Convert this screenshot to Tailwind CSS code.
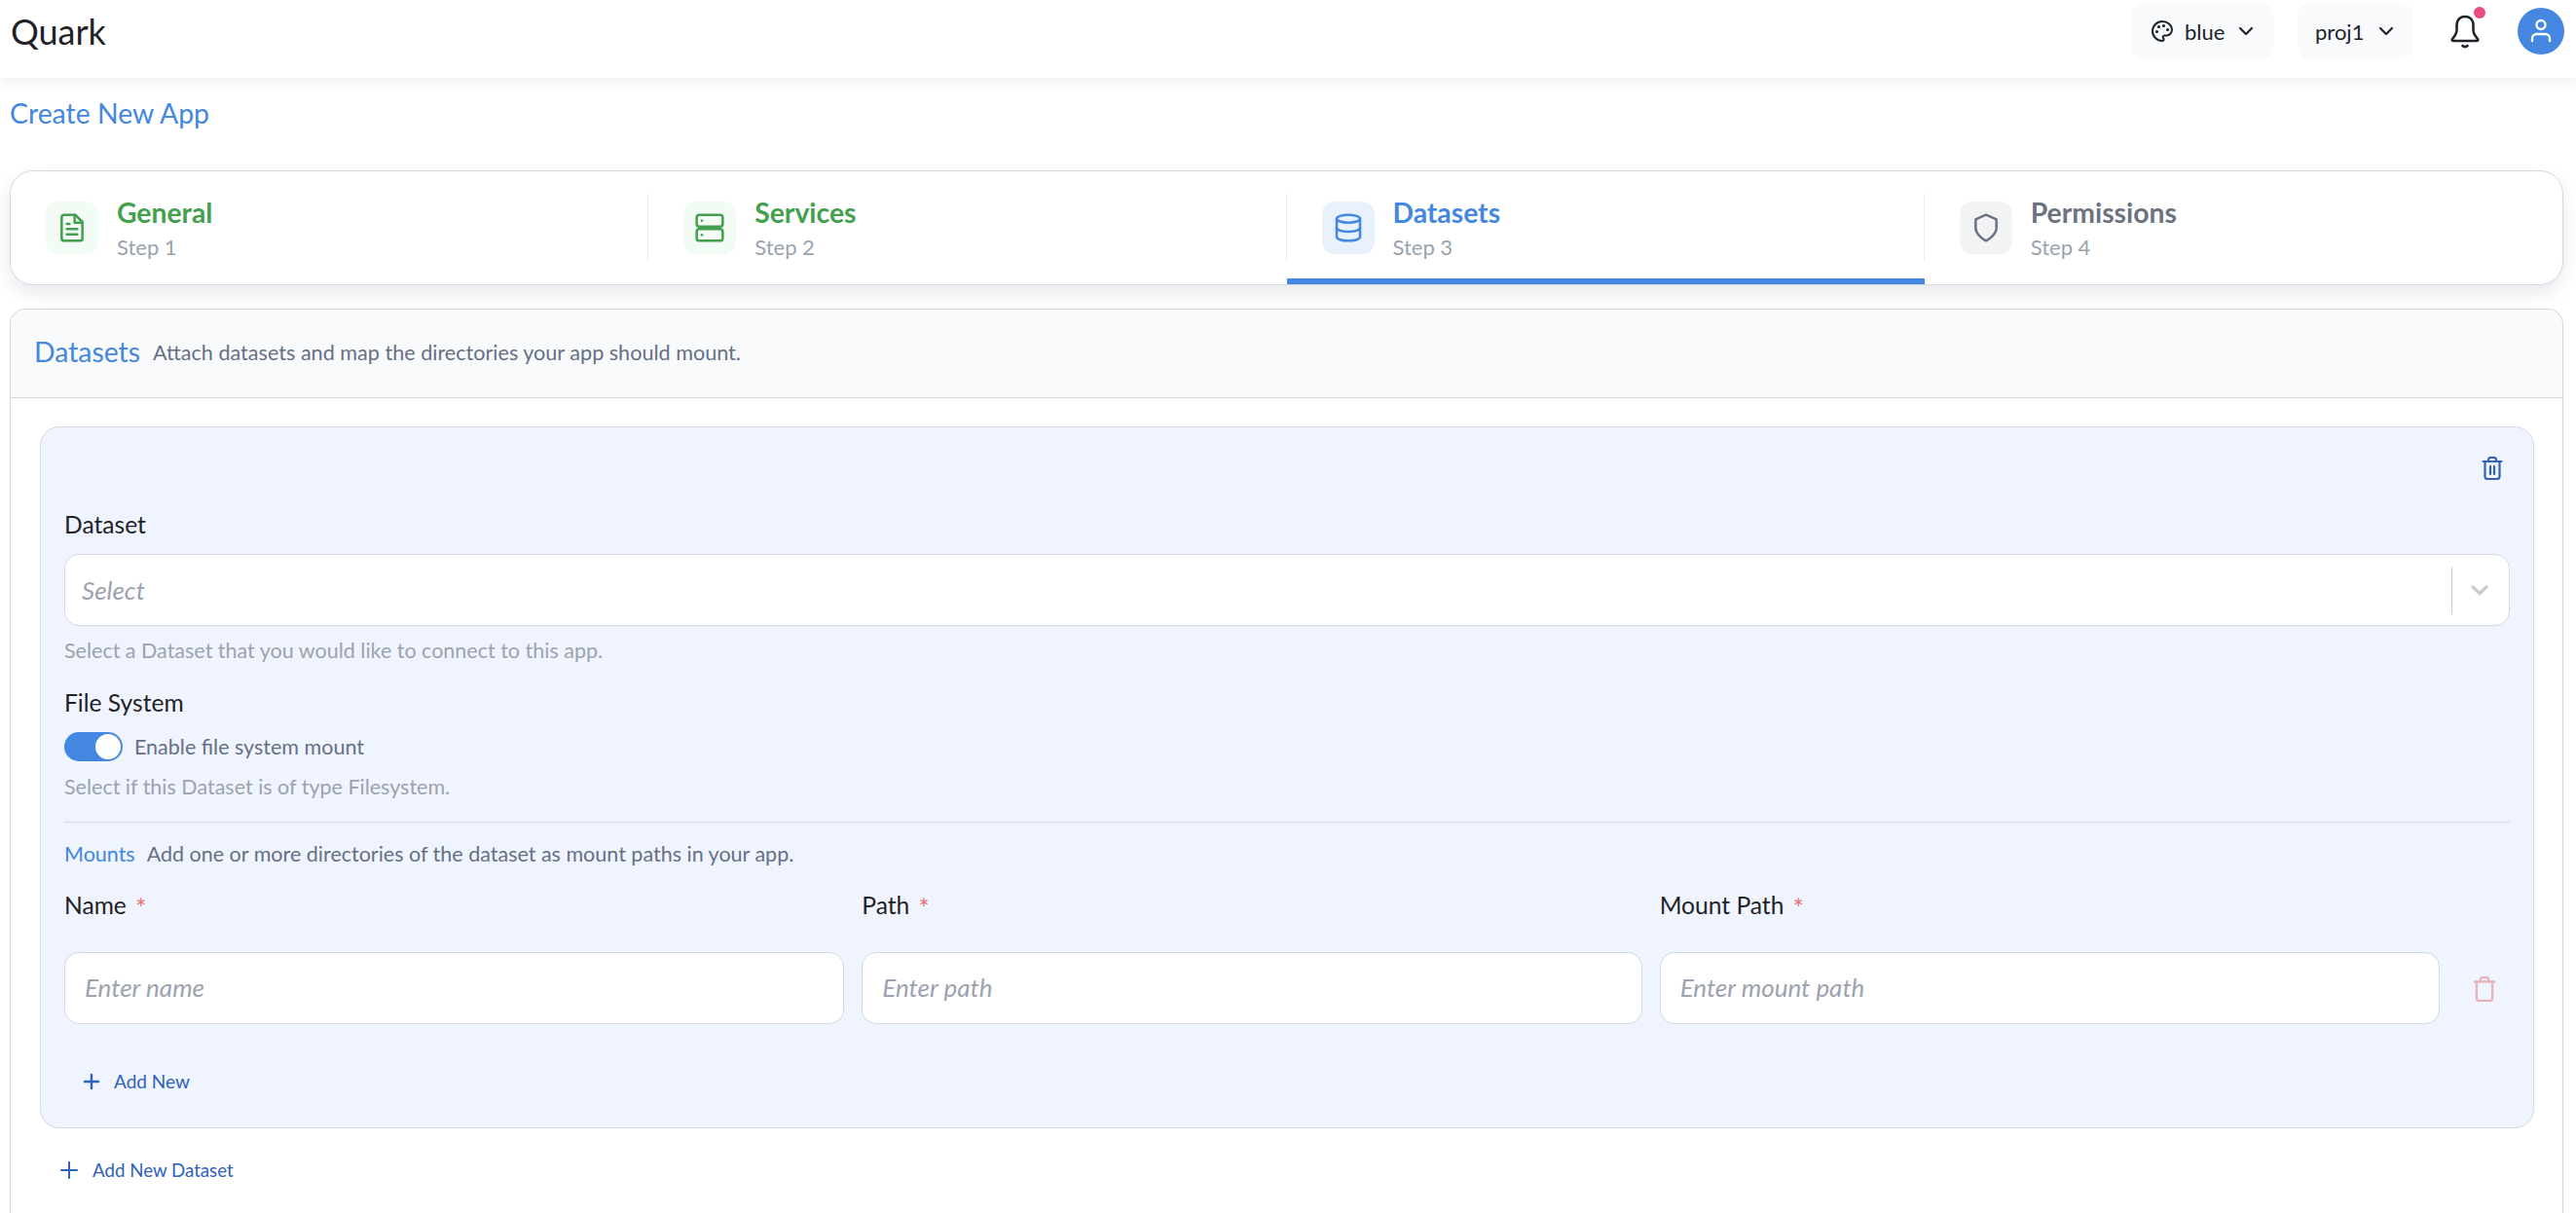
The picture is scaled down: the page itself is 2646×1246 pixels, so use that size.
<!DOCTYPE html>
<html lang="en">
<head>
<meta charset="utf-8">
<title>Quark</title>
<script src="https://cdn.jsdelivr.net/npm/@tailwindcss/browser@4"></script>
</head>
<body class="bg-white h-[1246px] overflow-hidden font-['Lato',sans-serif] text-[#1f2328]">
<header class="h-[80px] flex items-center justify-between pl-[11px] pr-[12px] bg-white shadow-[0_3px_14px_rgba(30,40,60,0.08)] relative">
  <div class="text-[36px] leading-[50px] pb-[16px]">Quark</div>
  <div class="flex items-center">
    <div class="flex items-center w-[146px] h-[56px] mb-[16px] pl-[19px] rounded-[12px] bg-[#f8fafc] text-[22px]">
      <svg class="w-[24px] h-[24px]" viewBox="0 0 24 24" fill="none" stroke="#1f2328" stroke-width="2" stroke-linecap="round" stroke-linejoin="round"><circle cx="13.5" cy="6.5" r=".6" fill="#1f2328"/><circle cx="17.5" cy="10.5" r=".6" fill="#1f2328"/><circle cx="8.5" cy="7.5" r=".6" fill="#1f2328"/><circle cx="6.5" cy="12.5" r=".6" fill="#1f2328"/><path d="M12 2C6.5 2 2 6.5 2 12s4.500 10 10 10c.930 0 1.600-.750 1.600-1.690 0-.430-.180-.830-.440-1.130-.290-.300-.440-.670-.440-1.120a1.640 1.640 0 0 1 1.670-1.670h2c3.050 0 5.560-2.500 5.560-5.550C21.950 6.010 17.460 2 12 2z"/></svg>
      <span class="ml-[11px]">blue</span>
      <svg class="w-[24px] h-[24px] ml-[10px]" viewBox="0 0 24 24" fill="none" stroke="#1f2328" stroke-width="2.200" stroke-linecap="round" stroke-linejoin="round"><path d="m6 9 6 6 6-6"/></svg>
    </div>
    <div class="flex items-center w-[118px] h-[56px] mb-[16px] ml-[24px] pl-[18px] rounded-[12px] bg-[#f8fafc] text-[22px]">
      <span>proj1</span>
      <svg class="w-[24px] h-[24px] ml-[11px]" viewBox="0 0 24 24" fill="none" stroke="#1f2328" stroke-width="2.200" stroke-linecap="round" stroke-linejoin="round"><path d="m6 9 6 6 6-6"/></svg>
    </div>
    <div class="relative w-[34px] h-[36px] ml-[37px] mb-[16px]">
      <svg class="w-[34px] h-[36px]" viewBox="0 0 34 36" fill="none" stroke="#1f2328" stroke-width="2.600" stroke-linecap="round" stroke-linejoin="round"><path d="M17 3c-5.500 0-8.500 4-8.500 9v5c0 4-2 6-4.500 9-.6.900 0 2 1 2h24c1 0 1.600-1.100 1-2-2.500-3-4.500-5-4.500-9v-5c0-5-3-9-8.500-9z"/><path d="M14.500 33c1.500 1.300 3.500 1.300 5 0"/></svg>
      <span class="absolute right-[-4px] top-[-7px] w-[12px] h-[12px] rounded-full bg-[#ec4a84]"></span>
    </div>
    <div class="flex items-center justify-center w-[48px] h-[48px] ml-[37px] mb-[16px] rounded-full bg-[#4387e0]">
      <svg class="w-[28px] h-[28px]" viewBox="0 0 28 28" fill="none" stroke="#fff" stroke-width="2.400" stroke-linecap="round" stroke-linejoin="round"><circle cx="14" cy="7.500" r="4.500"/><path d="M5 24v-2.500c0-2.500 2-4.500 4.500-4.500h9c2.500 0 4.500 2 4.500 4.500V24"/></svg>
    </div>
  </div>
</header>

<main class="pl-[10px] pr-[13px]">
  <div class="h-[95px] pt-[18px]"><span class="block text-[28.4px] leading-[36px] text-[#4387e0]">Create New App</span></div>

  <nav class="grid grid-cols-4 h-[118px] border border-[#d3d8e4] rounded-[24px] bg-white shadow-[0_8px_18px_rgba(30,40,60,0.10)] overflow-hidden">
    <div class="relative flex items-start pt-[31px] pl-[36px]">
      <span class="flex items-center justify-center w-[54px] h-[54px] rounded-[13px] bg-[#f2fbf4]">
        <svg class="w-[32px] h-[32px]" viewBox="0 0 24 24" fill="none" stroke="#43a04f" stroke-width="1.900" stroke-linecap="round" stroke-linejoin="round"><path d="M14.500 2H6a2 2 0 0 0-2 2v16a2 2 0 0 0 2 2h12a2 2 0 0 0 2-2V7.500z"/><path d="M14 2v6h6"/><path d="M16 13H8"/><path d="M16 17H8"/><path d="M10 9H8"/></svg>
      </span>
      <div class="ml-[19px] mt-[-7px]"><div class="text-[28.3px] leading-[36px] font-bold text-[#43a04f]">General</div><div class="text-[22px] leading-[32px] mt-[2px] text-[#9aa3af]">Step 1</div></div>
      <span class="absolute right-0 top-[23px] h-[70px] w-px bg-[#eceef2]"></span>
    </div>
    <div class="relative flex items-start pt-[31px] pl-[36px]">
      <span class="flex items-center justify-center w-[54px] h-[54px] rounded-[13px] bg-[#f2fbf4]">
        <svg class="w-[32px] h-[32px]" viewBox="0 0 24 24" fill="none" stroke="#43a04f" stroke-width="1.900" stroke-linecap="round" stroke-linejoin="round"><rect x="2" y="2" width="20" height="9" rx="2"/><rect x="2" y="13" width="20" height="9" rx="2"/><path d="M6 6.500h.01"/><path d="M6 17.500h.01"/></svg>
      </span>
      <div class="ml-[19px] mt-[-7px]"><div class="text-[28.3px] leading-[36px] font-bold text-[#43a04f]">Services</div><div class="text-[22px] leading-[32px] mt-[2px] text-[#9aa3af]">Step 2</div></div>
      <span class="absolute right-0 top-[23px] h-[70px] w-px bg-[#eceef2]"></span>
    </div>
    <div class="relative flex items-start pt-[31px] pl-[36px]">
      <span class="flex items-center justify-center w-[54px] h-[54px] rounded-[13px] bg-[#e9f1fc]">
        <svg class="w-[32px] h-[32px]" viewBox="0 0 24 24" fill="none" stroke="#4387e0" stroke-width="1.900" stroke-linecap="round" stroke-linejoin="round"><ellipse cx="12" cy="5" rx="9" ry="3"/><path d="M3 5v14c0 1.700 4 3 9 3s9-1.300 9-3V5"/><path d="M3 12c0 1.700 4 3 9 3s9-1.300 9-3"/></svg>
      </span>
      <div class="ml-[19px] mt-[-7px]"><div class="text-[28.3px] leading-[36px] font-bold text-[#4387e0]">Datasets</div><div class="text-[22px] leading-[32px] mt-[2px] text-[#9aa3af]">Step 3</div></div>
      <span class="absolute right-0 top-[23px] h-[70px] w-px bg-[#eceef2]"></span>
      <span class="absolute left-0 right-0 bottom-0 h-[6px] bg-[#4387e0]"></span>
    </div>
    <div class="relative flex items-start pt-[31px] pl-[36px]">
      <span class="flex items-center justify-center w-[54px] h-[54px] rounded-[13px] bg-[#f2f3f5]">
        <svg class="w-[32px] h-[32px]" viewBox="0 0 24 24" fill="none" stroke="#6b7280" stroke-width="1.900" stroke-linecap="round" stroke-linejoin="round"><path d="M12 22s8-4 8-10V5.500l-8-3.500-8 3.500V12c0 6 8 10 8 10z"/></svg>
      </span>
      <div class="ml-[19px] mt-[-7px]"><div class="text-[28.3px] leading-[36px] font-bold text-[#6b7280]">Permissions</div><div class="text-[22px] leading-[32px] mt-[2px] text-[#9aa3af]">Step 4</div></div>
    </div>
  </nav>

  <section class="mt-[24px] h-[929px] border border-b-0 border-[#d3d8e4] rounded-t-[16px] bg-white">
    <div class="flex items-center h-[91px] pb-[2px] pl-[24px] bg-[#f8fafc] border-b border-[#d3d8e4] rounded-t-[16px]">
      <span class="mb-[3px] text-[28.4px] leading-[36px] text-[#4387e0]">Datasets</span>
      <span class="ml-[13px] text-[21.6px] leading-[30px] text-[#667085]">Attach datasets and map the directories your app should mount.</span>
    </div>
    <div class="mt-[29px] ml-[30px] mr-[29px] h-[721px] border border-[#d3d8e4] rounded-[20px] bg-[#eff4fe] px-[24px]">
      <div class="flex justify-end h-[82px] pt-[30px] pr-[7px]">
        <svg class="w-[22px] h-[24px]" viewBox="0 0 22 24" fill="none" stroke="#2f62bd" stroke-width="2.200" stroke-linecap="round" stroke-linejoin="round"><path d="M1.500 5h19"/><path d="M7 5V3.500C7 2 8 1 9.500 1h3C14 1 15 2 15 3.500V5"/><path d="M3.500 5v15.500C3.500 22 4.500 23 6 23h10c1.500 0 2.500-1 2.500-2.500V5"/><path d="M9 10v8"/><path d="M13 10v8"/></svg>
      </div>
      <label class="block text-[24.6px] leading-[36px]">Dataset</label>
      <div class="flex items-center h-[74px] mt-[12px] pl-[17px] border border-[#d3d8e4] rounded-[15px] bg-white">
        <span class="flex-1 text-[26px] italic text-[#9ca3af]">Select</span>
        <span class="w-px h-[49px] bg-[#cccccc]"></span>
        <svg class="w-[24px] h-[24px] ml-[16px] mr-[18px]" viewBox="0 0 24 24" fill="none" stroke="#cccccc" stroke-width="3.400" stroke-linecap="round" stroke-linejoin="round"><path d="m5 9 7 6.500L19 9"/></svg>
      </div>
      <p class="mt-[10px] text-[21.5px] leading-[30px] text-[#9ca3af]">Select a Dataset that you would like to connect to this app.</p>
      <label class="block mt-[21px] text-[24.6px] leading-[36px]">File System</label>
      <div class="flex items-center mt-[12px] h-[30px]">
        <span class="flex items-center justify-end w-[60px] h-[30px] pr-[2px] rounded-full bg-[#4387e0]"><span class="w-[26px] h-[26px] rounded-full bg-white"></span></span>
        <span class="ml-[12px] text-[21.5px] text-[#667085]">Enable file system mount</span>
      </div>
      <p class="mt-[11px] text-[21.5px] leading-[30px] text-[#9ca3af]">Select if this Dataset is of type Filesystem.</p>
      <hr class="mt-[21px] border-0 h-px bg-[#d3d8e4]">
      <div class="flex items-center mt-[17px] h-[30px] text-[21.5px]">
        <span class="text-[#4387e0]">Mounts</span>
        <span class="ml-[12px] text-[#667085]">Add one or more directories of the dataset as mount paths in your app.</span>
      </div>
      <div class="flex mt-[20px]">
        <div class="grid grid-cols-3 grid-rows-[36px_104px] gap-x-[18px] flex-1">
          <label class="text-[24.6px] leading-[36px]">Name <span class="ml-[3px] text-[26px] align-[-4px] text-[#ec6b6b]">*</span></label>
          <label class="text-[24.6px] leading-[36px]">Path <span class="ml-[3px] text-[26px] align-[-4px] text-[#ec6b6b]">*</span></label>
          <label class="text-[24.6px] leading-[36px]">Mount Path <span class="ml-[3px] text-[26px] align-[-4px] text-[#ec6b6b]">*</span></label>
          <div class="flex items-center h-[74px] mt-[30px] pb-[2px] pl-[20px] border border-[#d3d8e4] rounded-[15px] bg-white text-[26px] italic text-[#9ca3af]">Enter name</div>
          <div class="flex items-center h-[74px] mt-[30px] pb-[2px] pl-[20px] border border-[#d3d8e4] rounded-[15px] bg-white text-[26px] italic text-[#9ca3af]">Enter path</div>
          <div class="flex items-center h-[74px] mt-[30px] pb-[2px] pl-[20px] border border-[#d3d8e4] rounded-[15px] bg-white text-[26px] italic text-[#9ca3af]">Enter mount path</div>
        </div>
        <div class="w-[72px] flex items-end pb-[23px] pl-[34px]">
          <svg class="w-[24px] h-[26px]" viewBox="0 0 22 24" fill="none" stroke="#e9b3bb" stroke-width="2.200" stroke-linecap="round" stroke-linejoin="round"><path d="M1.500 5h19"/><path d="M7 5V3.500C7 2 8 1 9.500 1h3C14 1 15 2 15 3.500V5"/><path d="M3.500 5v15.500C3.500 22 4.500 23 6 23h10c1.500 0 2.500-1 2.500-2.500V5"/></svg>
        </div>
      </div>
      <div class="flex items-center mt-[44px] h-[30px] pl-[19px] text-[19px] text-[#2f62bd]">
        <svg class="w-[18px] h-[18px]" viewBox="0 0 18 18" fill="none" stroke="#2f62bd" stroke-width="2.400" stroke-linecap="round"><path d="M9 2v14"/><path d="M2 9h14"/></svg>
        <span class="ml-[14px]">Add New</span>
      </div>
    </div>
    <div class="flex items-center mt-[28px] h-[30px] pl-[51px] text-[18.7px] text-[#2f62bd]">
      <svg class="w-[18px] h-[18px]" viewBox="0 0 18 18" fill="none" stroke="#2f62bd" stroke-width="2" stroke-linecap="round"><path d="M9 1v16"/><path d="M1 9h16"/></svg>
      <span class="ml-[15px]">Add New Dataset</span>
    </div>
  </section>
</main>
</body>
</html>
